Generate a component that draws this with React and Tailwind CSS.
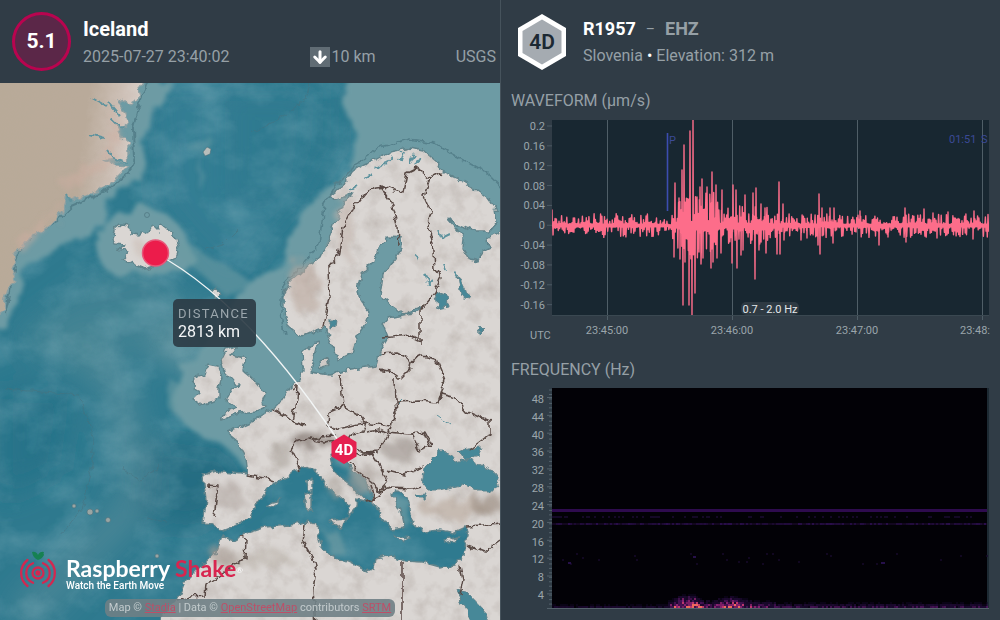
import { ArrowDown } from 'lucide-react'

const EVENT = { magnitude: '5.1', place: 'Iceland', time: '2025-07-27 23:40:02', depth: '10 km', source: 'USGS' }

function createRandom(seed) {
  let state = seed
  return () => {
    state = (state * 1664525 + 1013904223) % 4294967296
    return state / 4294967296
  }
}

const SHELVES = [
  '172,80 160,100 155,110 151,125 143,145 146,165 142,178 133,184 118,190 108,203 105,222 90,235 60,242 50,255 38,266 22,270 15,300 5,330 -10,330 -10,80',
  '98,240 104,224 120,214 145,208 168,215 182,228 190,245 196,258 176,268 160,274 140,277 118,276 104,268 96,255',
  '347,75 344,105 354,130 357,158 345,178 320,200 302,218 288,238 285,262 260,275 245,284 236,300 215,320 205,345 185,365 176,382 170,395 173,410 185,425 203,437 222,444 236,456 246,470 270,440 330,400 400,400 440,290 520,290 520,75',
]

const LAND = [
  // Greenland
  '-10,78 146,78 138,88 140,98 130,104 124,100 117,103 126,112 128,124 122,129 113,121 120,135 129,143 129,157 124,163 112,158 104,160 118,166 127,167 116,178 108,186 98,191 85,196 72,200 66,193 63,210 52,224 42,232 30,238 22,247 14,254 16,262 12,270 16,281 9,286 5,300 4,312 -10,320',
  // Iceland
  '112,240 114,230 120,225 130,226 131,235 138,236 143,231 148,234 153,225 158,230 162,225 172,233 176,240 179,249 176,257 166,261 156,266 145,269 133,264 123,259 129,252 118,250 125,245 114,244',
  // Scandinavia, the continent, Russia and Africa
  '288,326 284,308 284,292 292,280 306,268 321,256 328,240 334,224 343,206 352,193 334,200 330,195 345,183 352,172 362,166 376,160 390,152 410,148 424,151 436,161 441,171 456,178 472,187 487,198 496,210 498,222 490,231 474,231 458,224 448,219 456,228 464,238 463,248 470,260 478,262 482,251 490,247 488,238 510,226 510,630 150,630 165,611 178,598 184,583 200,567 216,552 222,536 234,541 250,532 266,527 290,525 306,522 317,524 318,534 321,546 330,556 348,562 367,571 374,568 376,559 390,555 405,561 422,562 440,567 456,565 463,555 465,542 468,532 466,527 453,533 440,530 424,532 414,526 410,512 410,500 398,491 392,494 400,510 404,528 391,530 382,516 374,504 369,490 364,478 350,468 337,452 330,455 332,467 343,480 356,490 369,502 357,499 355,509 347,517 350,506 338,495 325,484 316,470 305,467 292,472 282,480 268,488 257,504 250,517 232,527 222,531 214,525 203,524 206,500 203,475 215,471 248,475 246,458 236,440 226,432 238,428 254,421 268,411 279,404 288,390 300,379 304,370 303,352 312,344 318,342 314,355 310,372 330,375 350,369 376,366 380,350 388,337 383,324 388,318 418,312 420,308 404,314 390,304 380,296 383,275 394,260 403,247 402,238 388,237 380,244 374,262 362,274 358,290 360,300 370,312 365,324 358,335 352,354 338,361 332,345 324,328 315,331 302,337',
  // Great Britain and Ireland
  '226,350 237,346 231,355 246,358 243,370 252,378 260,388 266,392 262,402 268,406 256,411 240,413 222,420 226,411 236,407 226,400 232,390 238,386 231,378 224,371 221,360',
  '195,377 205,374 208,364 218,366 222,378 219,388 219,399 202,405 193,399 200,392 194,388',
  '328,520 346,518 342,529',
  '304,494 312,492 312,510 306,510',
  '307,482 312,479 312,490 308,490',
  '393,536 411,538 402,542',
  '445,540 459,537 451,544',
  '320,360 328,357 330,366 321,368',
  '213,291 217,288 218,293 215,299',
  '265,506 272,502 281,500 272,507',
]

const WATER = [
  '422,482 425,468 433,460 438,450 444,450 455,462 468,459 480,466 493,471 500,480 495,491 478,491 462,485 440,490 428,490',
  '458,452 468,448 482,447 478,456 468,459',
  '416,495 426,494 424,498 417,498',
  '435,292 447,296 448,306 438,308',
  '458,276 466,288 469,298 461,296',
  '330,320 337,320 336,328 330,329',
  '456,590 466,592 485,612 490,630 475,630',
  '478,325 484,330 481,333 477,330',
]

const BORDERS = [
  '323,327 329,298 328,268 338,256 343,228 352,210 366,192 376,188 385,187 395,191 403,192 407,173 417,168 430,178 440,173',
  '380,186 391,202 397,225 398,245',
  '430,178 424,196 431,212 428,224 434,250 435,270 441,277 435,292 420,310 420,345',
  '383,338 400,336 410,335 420,340',
  '380,354 397,353 412,361 411,368 400,379 389,371 380,369',
  '412,361 422,356 436,359 445,380 441,394 456,398 468,412 490,422 490,434 470,449',
  '395,378 396,402 420,401 438,403 441,394',
  '396,402 397,413 390,424 388,432 410,434 425,432 432,445',
  '340,375 343,406 328,412 327,425 338,429 357,424 366,423 388,427',
  '343,406 360,416 366,423 363,432 352,434 345,445',
  '366,432 380,430 388,434 378,452 364,453 352,448 344,450',
  '293,389 298,385 297,399 295,407 292,421 306,426',
  '271,408 282,413 292,421',
  '291,450 297,441 310,439 322,442 338,440 345,447',
  '291,450 297,462 300,470',
  '313,440 320,437 336,436',
  '345,452 360,456 371,453 382,470 387,482 378,492 372,482 360,473 350,463',
  '387,470 404,474 422,468',
  '376,492 390,488 412,489 421,486',
  '411,434 419,450 430,446 424,433',
  '207,485 218,486 216,500 214,518',
  '248,475 264,478 276,482',
  '305,524 303,542 312,557 316,570 313,590 316,625',
  '402,562 402,625',
  '460,566 463,580 460,595',
  '466,527 482,526 500,524',
  '466,545 484,552 500,540',
  '178,601 190,597 205,596 206,584 225,571 245,558 246,540 240,536',
  '370,485 374,501 367,502 380,496 385,486',
]

const RELIEF = [
  [312, 440, 22, 6, '#6d6058'],
  [400, 449, 17, 13, '#9b928b'],
  [305, 288, 15, 28, '#b9a79c'],
  [346, 226, 6, 35, '#c2b4ac'],
  [363, 480, 13, 16, '#aaa099'],
  [455, 509, 36, 10, '#b5a698'],
  [488, 506, 14, 13, '#8f7f72'],
  [256, 560, 40, 7, '#bab1aa'],
  [222, 556, 12, 8, '#a59a92'],
  [228, 495, 17, 13, '#b3aaa4'],
  [336, 487, 5, 14, '#aaa19b'],
  [282, 454, 9, 14, '#aaa19b'],
  [145, 249, 12, 8, '#cbbdb6'],
]

function EarthquakeMap() {
  return (
    <svg
      className="block h-full w-full"
      viewBox="0 83 500 537"
      preserveAspectRatio="xMidYMid slice"
      role="img"
      aria-label="Map from Iceland to station R1957"
      fontFamily="Roboto, sans-serif"
    >
      <defs>
        <filter id="rough" x="-5%" y="-5%" width="110%" height="110%">
          <feTurbulence type="fractalNoise" baseFrequency="0.13" numOctaves="2" seed="8" result="noise" />
          <feDisplacementMap in="SourceGraphic" in2="noise" scale="8" xChannelSelector="R" yChannelSelector="G" result="moved" />
          <feGaussianBlur in="moved" stdDeviation="0.4" />
        </filter>
        <filter id="soft" x="-20%" y="-20%" width="140%" height="140%">
          <feTurbulence type="fractalNoise" baseFrequency="0.04" numOctaves="3" seed="3" result="noise" />
          <feDisplacementMap in="SourceGraphic" in2="noise" scale="18" result="moved" />
          <feGaussianBlur in="moved" stdDeviation="2.2" />
        </filter>
        <filter id="cloud" x="-50%" y="-50%" width="200%" height="200%">
          <feGaussianBlur stdDeviation="14" />
        </filter>
        <filter id="hill" x="-50%" y="-50%" width="200%" height="200%">
          <feTurbulence type="fractalNoise" baseFrequency="0.09" numOctaves="3" seed="5" result="noise" />
          <feDisplacementMap in="SourceGraphic" in2="noise" scale="22" result="moved" />
          <feGaussianBlur in="moved" stdDeviation="2.5" />
        </filter>
        <filter id="seabed" x="0" y="0" width="100%" height="100%">
          <feTurbulence type="fractalNoise" baseFrequency="0.022 0.03" numOctaves="5" seed="12" />
          <feColorMatrix values="0 0 0 0 0.3  0 0 0 0 0.5  0 0 0 0 0.56  1.6 0 0 0 -0.62" />
        </filter>
        <filter id="ground" x="0" y="0" width="100%" height="100%">
          <feTurbulence type="fractalNoise" baseFrequency="0.06" numOctaves="4" seed="21" />
          <feColorMatrix values="0 0 0 0 0.3  0 0 0 0 0.25  0 0 0 0 0.22  1.8 0 0 0 -0.8" />
        </filter>
        <clipPath id="land-area">
          {LAND.slice(2).map((points) => (
            <polygon key={points} points={points} />
          ))}
        </clipPath>
        <linearGradient id="ice" x1="0" y1="0" x2="1" y2="0.2">
          <stop offset="0" stopColor="#b8aa98" />
          <stop offset="0.62" stopColor="#b9aa9a" />
          <stop offset="0.85" stopColor="#cfc2b9" />
          <stop offset="1" stopColor="#dcd5d0" />
        </linearGradient>
      </defs>

      <rect x="-500" y="-400" width="1500" height="1500" fill="#2f7a8f" />
      <g filter="url(#cloud)">
        <path d="M150 80h160l-10 120-70 90-70-80z" fill="#3a8197" opacity="0.5" />
        <path d="M70 330l50 60 20 110-60 60-60 60" fill="none" stroke="#5f929d" strokeWidth="34" opacity="0.5" />
        <path d="M10 340l80-60 60-20 40 50-100 70z" fill="#4b8795" opacity="0.6" />
        <path d="M140 350l50-40 30 0-20 70z" fill="#6c99a2" opacity="0.75" />
        <path d="M150 440l80 10 20 40-60 40-50-20z" fill="#20687f" opacity="0.75" />
        <path d="M0 390h70l-10 80-60 30z" fill="#256f86" opacity="0.7" />
        <path d="M225 90h110v60l-50 70-60-20z" fill="#2f788d" opacity="0.6" />
      </g>
      <rect x="-100" y="0" width="700" height="700" filter="url(#seabed)" opacity="0.4" />
      <g filter="url(#soft)" fill="#6d9ba4">
        {SHELVES.map((points) => (
          <polygon key={points} points={points} />
        ))}
        <path d="M185 140l22-3 8 4-4 6-7 5 0 34-5 3 3-38-22-8z" opacity="0.45" />
        <path d="M175 250l55 50 20-20-60-35z" opacity="0.6" />
        <path d="M165 375l14 6-4 34-10-10z" opacity="0.6" />
        <path d="M322 530l16 0 12 30-20-4z" opacity="0.7" />
        <path d="M335 462l14 8 20 30 4 0-12-28-20-16z" opacity="0.7" />
        <path d="M392 495l16 2 4 28-8 4z" opacity="0.7" />
      </g>
      <g fill="none" stroke="#4c6f7a" opacity="0.45" filter="url(#rough)">
        <path d="M5 389l75 6 5 20 9 22-2 28-9 42-22 28" />
        <path d="M250 133l32-16 24-18 4-16M205 249l18-4 15-15" />
        <path d="M120 466l20 14 20-14M166 522l-20-4" />
      </g>

      <g filter="url(#rough)" strokeLinejoin="round">
        <path
          d="M148 80l-10 28-5 20 1 32-5 12-20 18-37 16-16 16-34 22-7 21-10 50"
          fill="none"
          stroke="#55808b"
          strokeWidth="2"
        />
        <path
          d="M284 336l-3-24 2-26 22-24 14-17 5-40 12-20 24-24 20-14 30-8 25 4 17 11 35 19 20 21 20-3"
          fill="none"
          stroke="#55808b"
          strokeWidth="1.5"
        />
        {LAND.map((points, index) => (
          <polygon
            key={points}
            points={points}
            fill={index === 0 ? 'url(#ice)' : '#dad6d3'}
            stroke={index === 0 ? '#8ba0a3' : '#5f838b'}
            strokeWidth="1.4"
          />
        ))}
      </g>
      <g clipPath="url(#land-area)">
        <rect x="170" y="83" width="330" height="537" filter="url(#ground)" opacity="0.35" />
      </g>
      <g filter="url(#hill)" opacity="0.75">
        {RELIEF.map(([cx, cy, rx, ry, fill]) => (
          <ellipse key={`${cx}-${cy}`} cx={cx} cy={cy} rx={rx} ry={ry} fill={fill} opacity="0.75" />
        ))}
        <path d="M62 186l48-30 8-44M18 248l44-44" fill="none" stroke="#cdaea1" strokeWidth="8" opacity="0.7" />
      </g>
      <g filter="url(#rough)">
        {WATER.map((points) => (
          <polygon key={points} points={points} fill="#478898" stroke="#5f838b" />
        ))}
        <g fill="none" stroke="#5f939e" strokeWidth="2">
          <path d="M107 150l6 8 14 5M112 120l10 9M108 101l12 14M66 192l5 10M92 98l14 8M90 134l14 4" />
          <path d="M438 230l4 8 8-4M443 265l2 5M415 255l3 3M425 275l6 12M428 285l5-5M455 272l3 5" />
          <path d="M375 168l10-6M385 165l8-8M400 160l3-8M410 163l5-9M350 190l8-5M415 165l6-8M365 178l8-4" />
          <path d="M396 405l6-6M436 415l14 10" strokeWidth="1" />
        </g>
      </g>
      <g filter="url(#rough)" fill="none" stroke="#584944" strokeWidth="1.5" strokeLinejoin="round">
        {BORDERS.map((points) => (
          <polyline key={points} points={points} />
        ))}
      </g>
      <g fill="#9aa5a3" stroke="#4c6f7a" strokeWidth="0.6">
        <path d="M203 152l4-5 4 2-1 5-5 2z" fill="#b9bebb" />
        <circle cx="147" cy="215" r="2.5" fill="none" />
        <circle cx="74" cy="506" r="2" />
        <circle cx="90" cy="512" r="3" />
        <circle cx="97" cy="511" r="2" />
        <circle cx="108" cy="520" r="2.5" />
        <circle cx="157" cy="556" r="2" />
      </g>

      <path d="M155 253Q245 300 344 449" fill="none" stroke="#f2f5f5" strokeWidth="1.4" />
      <circle cx="155.5" cy="253" r="13" fill="#ec1c4b" stroke="#e7577a" strokeWidth="1.5" />
      <polygon
        points="344,435.500 355.500,442.500 355.500,456 344,463 332.500,456 332.500,442.500"
        fill="#e5204f"
        stroke="#e5204f"
        strokeWidth="2"
        strokeLinejoin="round"
      />
      <text x="344" y="455" textAnchor="middle" fontSize="15" fontWeight="700" fill="#fff">4D</text>

      <rect x="173" y="299" width="83" height="48" rx="5" fill="#2b3a44" fillOpacity="0.9" />
      <text x="178" y="318" fontSize="13" fill="#9ba6ac" className="tracking-widest">DISTANCE</text>
      <text x="178" y="337" fontSize="16" fill="#f4f6f7">2813 km</text>
    </svg>
  )
}

function BrandLogo() {
  return (
    <div className="flex items-center gap-2">
      <svg className="h-11 w-10 shrink-0" viewBox="0 0 40 44" aria-hidden="true">
        <path d="M14 4q4-1 6 3 2-4 6-3-1 1 0 3-2 4-6 5-5-2-6-8z" fill="#168152" />
        <g fill="none" stroke="#d32850" strokeWidth="2.3" strokeLinecap="round">
          <circle cx="20" cy="25" r="1.500" fill="#d32850" />
          <circle cx="20" cy="25" r="5.500" />
          <path d="M15 15.200a10.500 10.500 0 0 0 0 19.600M25 15.200a10.500 10.500 0 0 1 0 19.600" />
          <path d="M9.500 12a16.500 16.500 0 0 0 0 26M30.500 12a16.500 16.500 0 0 1 0 26" />
        </g>
      </svg>
      <div className="pt-2 text-white">
        <p className="font-[Lato,sans-serif] text-[23px] leading-6 font-bold">
          Raspberry <span className="text-[#d8254f]">Shake</span>
          <sup className="text-[8px] font-normal">®</sup>
        </p>
        <p className="text-[10px] leading-3 font-medium">Watch the Earth Move</p>
      </div>
    </div>
  )
}

function EventPanel() {
  return (
    <section className="flex min-w-0 flex-col">
      <header className="flex h-[83px] shrink-0 items-center gap-3 bg-[#303c46] pr-1 pl-3">
        <div className="flex h-[59px] w-[59px] shrink-0 items-center justify-center rounded-full border-3 border-[#b9044f] bg-[#5b2748] text-[21px] font-bold text-white">
          {EVENT.magnitude}
        </div>
        <div className="min-w-0 flex-1 pt-[3px] text-[#96a0a6]">
          <h1 className="text-[20px] leading-7 font-bold text-white">{EVENT.place}</h1>
          <div className="flex items-center justify-between leading-7">
            <time>{EVENT.time}</time>
            <span className="flex items-center gap-0.5">
              <span className="flex h-5 w-5 items-center justify-center bg-[#606c74] text-white">
                <ArrowDown size={18} strokeWidth={4} />
              </span>
              {EVENT.depth}
            </span>
            <span>{EVENT.source}</span>
          </div>
        </div>
      </header>
      <div className="relative min-h-0 flex-1 overflow-hidden">
        <div className="absolute inset-0">
          <EarthquakeMap />
        </div>
        <div className="absolute bottom-[28px] left-[18px]">
          <BrandLogo />
        </div>
        <p className="absolute inset-x-0 bottom-[3px] mx-auto w-fit rounded-md bg-[#6f8085]/90 px-1 text-[11px] leading-[18px] whitespace-nowrap text-[#c3cbcd]">
          Map © <a className="text-[#bd4f68] underline" href="#stadia">Stadia</a> | Data ©{' '}
          <a className="text-[#bd4f68] underline" href="#openstreetmap">OpenStreetMap</a> contributors{' '}
          <a className="text-[#bd4f68] underline" href="#srtm">SRTM</a>
        </p>
      </div>
    </section>
  )
}

const WAVE_PEAKS = [
  [552, 210], [553, 235], [675, 183], [674, 257], [679, 198], [680, 259], [682, 170], [683, 305], [684, 145], [685, 262],
  [690, 131], [689, 305], [692, 315], [693, 120], [695, 293], [697, 197], [699, 252], [700, 187], [701, 264], [702, 179],
  [703, 258], [707, 187], [710, 200], [711, 268], [712, 172], [713, 262], [716, 185], [717, 258], [721, 253], [722, 190],
  [732, 263], [733, 185], [736, 190], [737, 268], [741, 255], [743, 250], [745, 195], [753, 193], [755, 279], [756, 188],
  [759, 250], [761, 204], [765, 208], [766, 253], [777, 254], [779, 182], [780, 254], [783, 204], [784, 240], [801, 240],
  [807, 238], [818, 245], [819, 194], [820, 254], [822, 208], [830, 208], [833, 243], [834, 208], [860, 211], [879, 245],
  [888, 237], [905, 208], [906, 242], [924, 209], [933, 213], [937, 238], [948, 212], [973, 239], [974, 211],
]

function noiseLevel(x) {
  if (x < 662) return 12
  if (x < 671) return 6
  if (x < 686) return 24
  if (x < 720) return 34
  if (x < 770) return 20
  return 12
}

function buildWavePath() {
  const random = createRandom(17)
  const points = []
  for (let x = 552.5; x < 989; x += 1.3) {
    const height = noiseLevel(x) * (0.1 + 0.9 * random() ** 1.8)
    const depth = noiseLevel(x) * (0.1 + 0.9 * random() ** 1.8)
    points.push([x, 225.5 - height], [x + 0.6, 225.5 + depth])
  }
  WAVE_PEAKS.forEach(([x, y]) => points.push([x - 0.3, 225.5], [x, y], [x + 0.3, 225.5]))
  points.sort((a, b) => a[0] - b[0])
  return `M${points.map(([x, y]) => `${x.toFixed(1)} ${y.toFixed(1)}`).join('L')}`
}

const WAVE_PATH = buildWavePath()
const WAVE_TICKS = ['0.2', '0.16', '0.12', '0.08', '0.04', '0', '-0.04', '-0.08', '-0.12', '-0.16']
const TIME_TICKS = [
  { x: 607.5, textX: 607, label: '23:45:00' },
  { x: 732.5, textX: 732, label: '23:46:00' },
  { x: 857.5, textX: 857, label: '23:47:00' },
  { x: 982.5, textX: 975, label: '23:48:' },
]

function WaveformChart() {
  return (
    <svg
      className="block h-auto w-full"
      viewBox="501 111 499 241"
      role="img"
      aria-label="Waveform"
      fontFamily="Roboto, sans-serif"
      fontSize="11"
      fill="#9aa5ab"
    >
      <defs>
        <clipPath id="wave-plot">
          <rect x="552" y="120" width="437" height="195" />
        </clipPath>
      </defs>
      <rect x="552" y="120" width="437" height="195" fill="#182731" />
      {WAVE_TICKS.map((label, index) => {
        const y = 126 + index * 19.85
        return (
          <g key={label}>
            <path d={`M547 ${y}h5`} stroke="#4b5963" />
            <text x="545" y={y + 4} textAnchor="end">{label}</text>
          </g>
        )
      })}
      {TIME_TICKS.map(({ x, textX, label }) => (
        <g key={label}>
          <path d={`M${x} 120V320`} stroke="#4f5e67" />
          <text x={textX} y="334" textAnchor="middle">{label}</text>
        </g>
      ))}
      <path d="M552 315.500H989" stroke="#3a4851" />
      <path d="M667.500 133V211" stroke="#3c4db0" strokeWidth="1.6" />
      <text x="669" y="144" fill="#3b4a96">P</text>
      <text x="949" y="143" fill="#3b4a96">01:51</text>
      <text x="981" y="143" fill="#3b4a96">S</text>
      <g clipPath="url(#wave-plot)">
        <path d={WAVE_PATH} fill="none" stroke="#fd6d8a" strokeWidth="1.4" strokeLinejoin="round" />
      </g>
      <rect x="741" y="302" width="58" height="13" rx="5" fill="#2e3a43" />
      <text x="770" y="313" textAnchor="middle" fill="#e4e8ea">0.7 - 2.0 Hz</text>
      <text x="530" y="339">UTC</text>
    </svg>
  )
}

const HEAT_COLORS = ['#14082a', '#2b0e47', '#561666', '#8a2272', '#bd386d', '#ee6a5c']

function heatAt(x) {
  if (x < 668) return 0.32
  const burst = 0.75 * Math.exp(-(((x - 687) / 12) ** 2)) + 0.45 * Math.exp(-(((x - 732) / 16) ** 2))
  return Math.min(1.15, (x < 775 ? 0.6 : 0.48) + burst)
}

function buildSpectrum() {
  const random = createRandom(41)
  const cells = []
  for (let x = 552; x < 987; x += 2) {
    const strength = heatAt(x)
    for (let row = 0; row < 8; row += 1) {
      const value = (strength - row * 0.16) * (0.35 + random() * 0.75)
      if (value > 0.12) {
        const color = HEAT_COLORS[Math.min(5, Math.floor(value * 5.6))]
        cells.push({ x, y: 606 - row * 2, color, opacity: Math.min(1, value + 0.3) })
      }
    }
    if (random() > 0.4) cells.push({ x, y: 523, color: '#2c0f50', opacity: 0.3 + random() * 0.6 })
    if (random() > 0.7) cells.push({ x, y: 516, color: '#1d0b35', opacity: 0.7 })
    if (random() > 0.88) cells.push({ x, y: 553 + Math.floor(random() * 6) * 2, color: '#180a2e', opacity: 0.7 })
  }
  return cells
}

const SPECTRUM = buildSpectrum()
const FREQUENCIES = [48, 44, 40, 36, 32, 28, 24, 20, 16, 12, 8, 4]
const MINOR_TICKS = Array.from({ length: 50 }, (_, index) => 390 + index * 4.46)

function FrequencyChart() {
  return (
    <svg
      className="block h-auto w-full"
      viewBox="501 380 499 240"
      role="img"
      aria-label="Frequency spectrogram"
      fontFamily="Roboto, sans-serif"
      fontSize="11"
      fill="#9aa5ab"
    >
      {MINOR_TICKS.map((y) => (
        <path key={y} d={`M549 ${y}h3`} stroke="#53616b" />
      ))}
      {FREQUENCIES.map((value, index) => (
        <g key={value}>
          <path d={`M547 ${397.5 + index * 17.85}h5`} stroke="#53616b" />
          <text x="544" y={403 + index * 17.82} textAnchor="end">{value}</text>
        </g>
      ))}
      <rect x="552" y="388" width="437" height="220" fill="#1d2a33" />
      <rect x="552" y="388" width="435" height="220" fill="#020106" />
      <path d="M552 510.500H987" stroke="#2e0b4e" strokeWidth="3" />
      <path d="M552 524H987" stroke="#180929" strokeWidth="1.5" />
      {SPECTRUM.map((cell, index) => (
        <rect key={index} x={cell.x} y={cell.y} width="2" height="2" fill={cell.color} opacity={cell.opacity} />
      ))}
      <path d="M547 608.500H989" stroke="#53616b" />
      <path d="M568 562h3v2h-3zM693 556h3v2h-3zM881 562h4v2h-4z" fill="#26104a" />
    </svg>
  )
}

function StationPanel() {
  return (
    <section className="min-w-0 border-l border-[#46535c] bg-[#303c46] text-[#96a0a6]">
      <header className="flex h-[83px] items-center gap-4 px-4">
        <svg className="h-14 w-[50px] shrink-0" viewBox="0 0 50 56" role="img" aria-label="Station type 4D">
          <polygon points="25,0 49,14 49,42 25,56 1,42 1,14" fill="#fff" />
          <polygon points="25,5.500 44.500,17 44.500,39 25,50.500 5.500,39 5.500,17" fill="#a5abb1" />
          <text x="25" y="35" textAnchor="middle" fontFamily="Roboto, sans-serif" fontSize="21" fontWeight="600" fill="#1c2933">4D</text>
        </svg>
        <div>
          <h2 className="flex gap-[10px] text-[18px] leading-7 font-bold">
            <span className="text-white">R1957</span>
            <span className="text-sm leading-7 font-normal">–</span>
            <span>EHZ</span>
          </h2>
          <p className="leading-[26px]">
            Slovenia <span className="text-white">•</span> Elevation: 312 m
          </p>
        </div>
      </header>
      <h3 className="px-[10px] pt-2 leading-5">WAVEFORM (µm/s)</h3>
      <WaveformChart />
      <h3 className="px-[10px] pt-2 leading-5">FREQUENCY (Hz)</h3>
      <FrequencyChart />
    </section>
  )
}

export default function App() {
  return (
    <main className="grid min-h-screen grid-cols-2 bg-[#303c46] font-[Roboto,sans-serif] text-base">
      <EventPanel />
      <StationPanel />
    </main>
  )
}
